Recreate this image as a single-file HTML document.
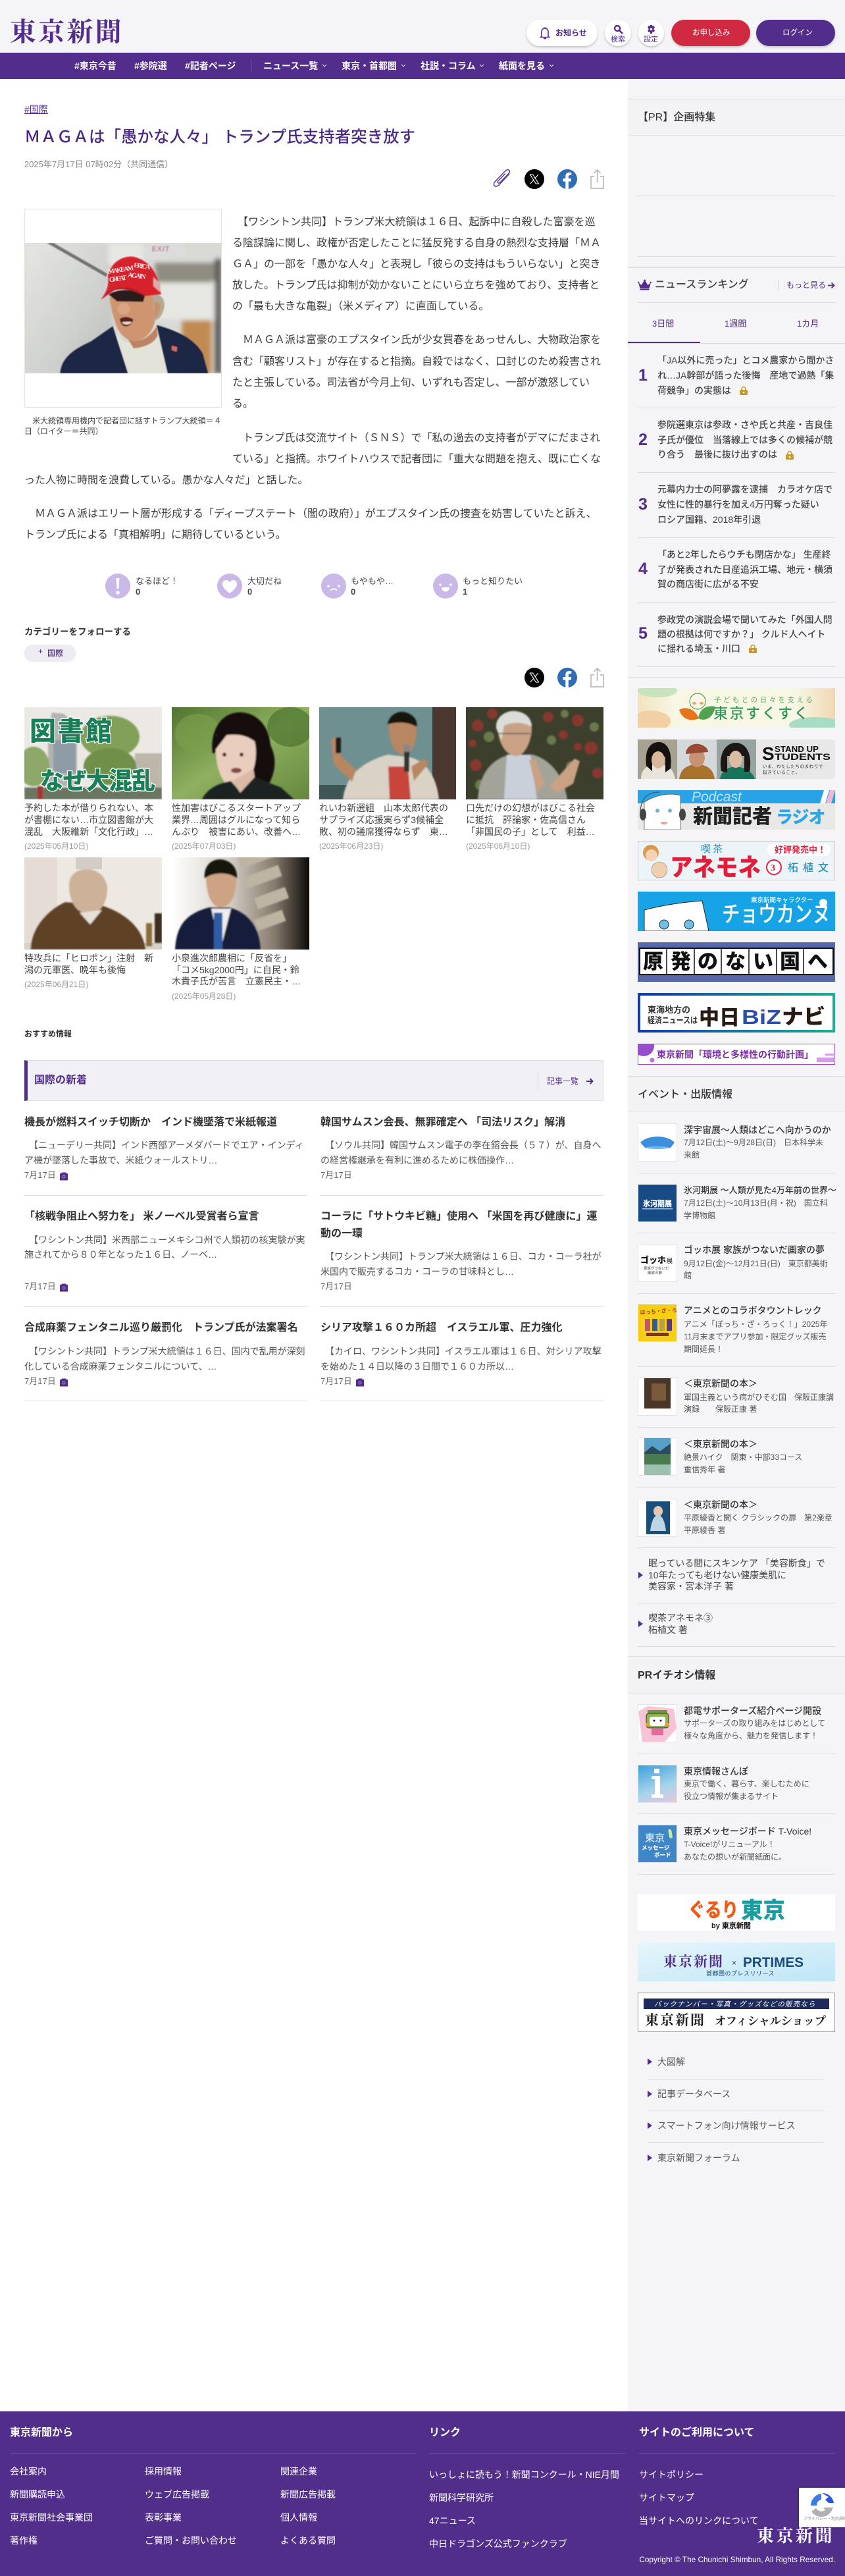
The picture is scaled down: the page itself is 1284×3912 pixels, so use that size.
<!DOCTYPE html>
<html lang="ja">
<head>
<meta charset="utf-8">
<title>MAGAは「愚かな人々」 トランプ氏支持者突き放す</title>
<style>
*{box-sizing:border-box}
html,body{margin:0;padding:0}
body{width:1284px;height:3912px;position:relative;overflow:hidden;background:#fff;color:#333;font-family:"Liberation Sans","Noto Sans CJK JP",sans-serif;font-size:14px}
.b,.t,.i{position:absolute}
.t{white-space:nowrap;line-height:20px}
.pu{color:#532d8c}
.w5{font-weight:500}
.bd{font-weight:700}
.a16{font-size:16px;color:#3d3d3d;line-height:20px}
.cap{font-size:12px;color:#444}
.ct{font-size:14px;color:#444}
.cd{font-size:12px;color:#999}
.nt{font-size:16px;font-weight:700;color:#333}
.ne{font-size:14px;color:#555}
.nd{font-size:13px;color:#666}
.hl{height:1px;background:#dedede}
.nav{font-size:14px;font-weight:700;color:#fff}
.rk{font-size:14px;font-weight:500;color:#444;line-height:20px}
.rn{font-size:25px;font-weight:900;color:#532d8c;line-height:24px}
.et{font-size:14px;font-weight:500;color:#333}
.ed{font-size:12px;color:#555}
.ll{font-size:14px;color:#444;line-height:18px}
.ft{font-size:14px;color:#fff}
.fh{font-size:16px;font-weight:700;color:#fff}
.lk{font-size:14px;color:#555}
svg{display:block}
.th{position:absolute;width:60px;height:58px;background:#fff;border:1px solid #e4e4e4;overflow:hidden}
.tri{position:absolute;width:0;height:0;border-left:7px solid #532d8c;border-top:5px solid transparent;border-bottom:5px solid transparent}
.sh{box-shadow:0 2px 3px rgba(0,0,0,.2)}
</style>
</head>
<body>
<svg width="0" height="0" style="position:absolute">
<symbol id="x" viewBox="0 0 30 30"><circle cx="15" cy="15" r="15" fill="#000"/><path d="M8.5 8h4.2l8.8 14h-4.2zM21 8l-5.5 6.2M14 16.2 8.8 22" fill="none" stroke="#fff" stroke-width="1.1"/></symbol>
<symbol id="f" viewBox="0 0 30 30"><circle cx="15" cy="15" r="15" fill="#2f6db5"/><path d="M16.8 30V18.6h3.7l.7-4.5h-4.4v-2.7c0-1.3.6-2.4 2.5-2.4h2V5.2c-1-.2-2.200-.3-3.300-.3-3.500 0-5.700 2.100-5.700 5.900v3.300H8.500v4.500h3.800V30z" fill="#fff"/></symbol>
<symbol id="s" viewBox="0 0 21 30"><path d="M6 11H1v18h19V11h-5M10.500 20V1M5.500 6l5-5 5 5" fill="none" stroke="#b0b0b0" stroke-width="1.500"/></symbol>
<symbol id="cam" viewBox="0 0 14 14"><path d="M4 1.500h6l1 1.500h2v10.500H1V3h2z" fill="#532d8c"/><circle cx="7" cy="8" r="2" fill="none" stroke="#a89bd0" stroke-width="1"/></symbol>
<symbol id="lock" viewBox="0 0 14 14"><path d="M4 6V4.500a3 3 0 0 1 6 0V6" fill="none" stroke="#c89a2a" stroke-width="1.600"/><rect x="1" y="6" width="12" height="8" rx="1.500" fill="#c89a2a"/><circle cx="7" cy="10" r="1.300" fill="#fff"/></symbol>
</svg>

<!-- header -->
<div class="b" style="left:0;top:0;width:1284px;height:80px;background:#f5f5f7"></div>
<div class="t" style="left:15px;top:27px;font-family:'Liberation Serif','Noto Serif CJK SC',serif;font-size:40px;line-height:44px;font-weight:700;color:#532d8c;letter-spacing:3.200px">東京新聞</div>

<div class="b sh" style="left:800px;top:30px;width:108px;height:40px;border-radius:20px;background:#fff"></div>
<svg class="i" style="left:820px;top:40px" width="16" height="20" viewBox="0 0 16 20"><path d="M3 15V8a5 5 0 0 1 10 0v7l1.500 1.500h-13z" fill="none" stroke="#532d8c" stroke-width="1.600"/><path d="M6 2.500h4M6 18.500h4" stroke="#532d8c" stroke-width="1.800"/></svg>
<div class="t bd pu" style="left:844px;top:40px;font-size:12px">お知らせ</div>

<div class="b sh" style="left:919px;top:30px;width:40px;height:40px;border-radius:20px;background:#fff"></div>
<svg class="i" style="left:932px;top:37px" width="15" height="15" viewBox="0 0 15 15"><circle cx="6" cy="6" r="4" fill="none" stroke="#532d8c" stroke-width="2.400"/><path d="M9 9l5 5" stroke="#532d8c" stroke-width="2.600"/></svg>
<div class="t pu" style="left:928px;top:50px;font-size:11px">検索</div>

<div class="b sh" style="left:970px;top:30px;width:39px;height:40px;border-radius:20px;background:#fff"></div>
<svg class="i" style="left:982px;top:37px" width="15" height="15" viewBox="0 0 15 15"><path d="M6 1h3l.5 2 2-.700 1.500 2.500-1.500 1.500V7.700l1.500 1.500-1.500 2.600-2-.7L9 14H6l-.5-2.900-2 .7L2 9.200l1.500-1.500V6.300L2 4.800l1.500-2.500 2 .7z" fill="#532d8c"/><circle cx="7.500" cy="7.500" r="1.800" fill="#fff"/></svg>
<div class="t pu" style="left:978px;top:50px;font-size:11px">設定</div>

<div class="b sh" style="left:1020px;top:30px;width:120px;height:40px;border-radius:20px;background:#cf2a41"></div>
<div class="t" style="left:1052px;top:40px;font-size:11.500px;color:#fff">お申し込み</div>
<div class="b sh" style="left:1149px;top:30px;width:120px;height:40px;border-radius:20px;background:#532d8c"></div>
<div class="t" style="left:1189px;top:40px;font-size:11.500px;color:#fff">ログイン</div>

<!-- nav -->
<div class="b" style="left:0;top:80px;width:1284px;height:40px;background:#532d8c"></div>
<div class="t nav" style="left:113px;top:90px">#東京今昔</div>
<div class="t nav" style="left:204px;top:90px">#参院選</div>
<div class="t nav" style="left:281px;top:90px">#記者ページ</div>
<div class="b" style="left:381px;top:90px;width:1px;height:20px;background:#7a5cb0"></div>
<div class="t nav" style="left:400px;top:90px">ニュース一覧</div>
<div class="t nav" style="left:519px;top:90px">東京・首都圏</div>
<div class="t nav" style="left:639px;top:90px">社説・コラム</div>
<div class="t nav" style="left:758px;top:90px">紙面を見る</div>
<svg class="i" style="left:0;top:0" width="1284" height="120"><g fill="none" stroke="#ddd" stroke-width="1"><path d="M490 98l3 3 3-3M610 98l3 3 3-3M729 98l3 3 3-3M835 98l3 3 3-3"/></g></svg>

<!-- sidebar background -->
<div class="b" style="left:954px;top:120px;width:330px;height:3542px;background:#f5f5f7"></div>

<!-- main -->
<div class="t" style="left:37px;top:156px;font-size:14px;color:#532d8c;text-decoration:underline">#国際</div>
<div class="t w5" style="left:37px;top:191px;font-size:24.500px;line-height:36px;color:#4a2a85">ＭＡＧＡは「愚かな人々」 トランプ氏支持者突き放す</div>
<div class="t" style="left:37px;top:240px;font-size:13px;color:#888">2025年7月17日 07時02分（共同通信）</div>

<svg class="i" style="left:748px;top:257px" width="30" height="30" viewBox="0 0 30 30"><path d="M26 7 10 24c-2 2.200-5 2.700-6.500 1.300S2 21 4.200 18.800L20 2.500c1.800-1.800 4.300-2.200 5.600-1s.9 3.600-.9 5.400L12 20c-1.100 1.100-2.500 1.400-3.300.7s-.4-2.200.7-3.300L20 6.500" fill="none" stroke="#5a3a96" stroke-width="1.500"/></svg>
<svg class="i" style="left:797px;top:257px" width="30" height="30"><use href="#x"/></svg>
<svg class="i" style="left:847px;top:257px" width="30" height="30"><use href="#f"/></svg>
<svg class="i" style="left:897px;top:257px" width="21" height="30"><use href="#s"/></svg>

<!-- article photo -->
<div class="b" style="left:37px;top:317px;width:300px;height:302px;border:1px solid #e2e2e2;background:#fff"></div>
<svg class="i" style="left:38px;top:369px" width="298" height="198" viewBox="0 0 894 594">
<defs>
<filter id="bl1" x="-5%" y="-5%" width="110%" height="110%"><feGaussianBlur stdDeviation="10"/></filter>
<filter id="bl2"><feGaussianBlur stdDeviation="2.500"/></filter>
<filter id="b3" x="-5%" y="-5%" width="110%" height="110%"><feGaussianBlur stdDeviation="1"/></filter>
<linearGradient id="wall" x1="0" x2="1" y1="0" y2="1"><stop offset="0" stop-color="#e6e7e4"/><stop offset=".6" stop-color="#cfd1ce"/><stop offset="1" stop-color="#babcb9"/></linearGradient>
</defs>
<rect width="894" height="594" fill="#d8dad7"/>
<g filter="url(#bl1)">
<rect x="0" y="0" width="400" height="594" fill="url(#wall)"/>
<path d="M380 0h160v100H380z" fill="#e6e6e2"/>
<rect x="545" y="0" width="349" height="80" fill="#d9d9d6"/>
<path d="M590 90h300v60l-60 40-230-10z" fill="#8f8d82"/>
<path d="M610 180h260v170H600z" fill="#e6e6e2"/>
<rect x="715" y="352" width="135" height="242" fill="#c28a52"/>
<rect x="865" y="70" width="29" height="524" fill="#5c5a55"/>
</g>
<path d="M100 0h30l245 140-6 14z" fill="#73736f" filter="url(#bl2)"/>
<path d="M545 5h185v60l-185 15z" fill="#dcdcdc" filter="url(#bl2)"/>
<text x="578" y="38" font-size="32" font-weight="700" font-family="Liberation Sans" fill="#c08a92" letter-spacing="3" filter="url(#bl2)">EXIT</text>
<g filter="url(#bl2)">
<path d="M160 594c6-70 60-110 140-145l100-70 70 215z" fill="#1a2545"/>
<path d="M600 374c90 25 170 60 210 130l25 90H640z" fill="#1a2545"/>
<path d="M415 415 470 594h180l-30-130-20-85c-20 50-70 80-130 75-30-5-40-25-55-39z" fill="#e3e3da"/>
<path d="M385 245 590 235l6 100c-5 60-45 110-95 112-40 0-75-35-90-85-10-35-22-75-26-117z" fill="#cf9571"/>
<path d="M470 440c40 15 90 5 130-60l5 40c-10 30-50 55-110 60z" fill="#bd8362"/>
<path d="M580 240c30-15 60 10 55 50-6 34-22 60-45 62z" fill="#b4a993"/>
<path d="M590 270c20-5 30 10 25 30s-14 38-25 44z" fill="#c98f6e"/>
<path d="M382 235c40-30 130-25 165 5l-8 28-120-2z" fill="#2a1f1c"/>
<ellipse cx="450" cy="300" rx="28" ry="26" fill="#dba583"/>
<path d="M432 345c20-12 45-10 62 4-4 22-24 34-40 30-14-2-22-20-22-34z" fill="#59201e"/>
<path d="M440 362c14-4 34-4 48-2-8 12-32 18-48 2z" fill="#e8d8cc"/>
<path d="M345 258c25-30 40-65 33-108 17-70 72-90 112-88 70 14 120 68 130 172l-70 8c-50-30-120-42-150-22-20 14-40 30-55 38z" fill="#d7232e"/>
<path d="M362 238c30-30 90-45 130-30l58 32-4 3c-50-30-120-42-150-22z" fill="#b01a23"/>
<path d="M585 155l32 30v40l-32-28z" fill="#e0a8a8"/>
<path d="M669 468l25 6-3 22-22-8z" fill="#d86c62"/>
</g>
<g font-family="Liberation Serif" font-weight="700" fill="#f6e6e6">
<text x="380" y="141" font-size="31" transform="rotate(-9 380 141)" textLength="118">MAKE AM</text>
<text x="495" y="110" font-size="31" transform="rotate(8 495 110)" textLength="76">ERICA</text>
<text x="385" y="178" font-size="31" transform="rotate(-8 385 178)" textLength="80">GREAT</text>
<text x="468" y="155" font-size="31" transform="rotate(6 468 155)" textLength="82">AGAIN</text>
</g>
</svg>
<div class="t cap" style="left:37px;top:629px">　米大統領専用機内で記者団に話すトランプ大統領＝４</div>
<div class="t cap" style="left:37px;top:645px">日（ロイター＝共同）</div>

<!-- article text -->
<div class="t a16" style="left:353px;top:328px">　【ワシントン共同】トランプ米大統領は１６日、起訴中に自殺した富豪を巡</div>
<div class="t a16" style="left:353px;top:360px">る陰謀論に関し、政権が否定したことに猛反発する自身の熱烈な支持層「ＭＡ</div>
<div class="t a16" style="left:353px;top:392px">ＧＡ」の一部を「愚かな人々」と表現し「彼らの支持はもういらない」と突き</div>
<div class="t a16" style="left:353px;top:424px">放した。トランプ氏は抑制が効かないことにいら立ちを強めており、支持者と</div>
<div class="t a16" style="left:353px;top:456px">の「最も大きな亀裂」（米メディア）に直面している。</div>
<div class="t a16" style="left:353px;top:507px">　ＭＡＧＡ派は富豪のエプスタイン氏が少女買春をあっせんし、大物政治家を</div>
<div class="t a16" style="left:353px;top:540px">含む「顧客リスト」が存在すると指摘。自殺ではなく、口封じのため殺害され</div>
<div class="t a16" style="left:353px;top:572px">たと主張している。司法省が今月上旬、いずれも否定し、一部が激怒してい</div>
<div class="t a16" style="left:353px;top:604px">る。</div>
<div class="t a16" style="left:353px;top:656px">　トランプ氏は交流サイト（ＳＮＳ）で「私の過去の支持者がデマにだまされ</div>
<div class="t a16" style="left:353px;top:688px">ている」と指摘。ホワイトハウスで記者団に「重大な問題を抱え、既に亡くな</div>
<div class="t a16" style="left:37px;top:720px">った人物に時間を浪費している。愚かな人々だ」と話した。</div>
<div class="t a16" style="left:37px;top:771px">　ＭＡＧＡ派はエリート層が形成する「ディープステート（闇の政府）」がエプスタイン氏の捜査を妨害していたと訴え、</div>
<div class="t a16" style="left:37px;top:803px">トランプ氏による「真相解明」に期待しているという。</div>

<!-- reactions -->
<svg class="i" style="left:160px;top:871px" width="38" height="38"><circle cx="19" cy="19" r="19" fill="#c9b8e8"/><path d="M16.500 7h5l-1 16h-3z" fill="#fff"/><circle cx="19" cy="29" r="2.800" fill="#fff"/></svg>
<div class="t" style="left:206px;top:873px;font-size:13px;color:#444">なるほど！</div>
<div class="t bd" style="left:206px;top:889px;font-size:13px;color:#444">0</div>
<svg class="i" style="left:330px;top:871px" width="38" height="38"><circle cx="19" cy="19" r="19" fill="#c9b8e8"/><path d="M19 30C11 24 8 20 8 15.500 8 12 10.500 10 13.500 10c2.300 0 4.300 1.200 5.500 3.500C20.200 11.200 22.200 10 24.500 10 27.500 10 30 12 30 15.500 30 20 27 24 19 30z" fill="#fff"/></svg>
<div class="t" style="left:376px;top:873px;font-size:13px;color:#444">大切だね</div>
<div class="t bd" style="left:376px;top:889px;font-size:13px;color:#444">0</div>
<svg class="i" style="left:488px;top:871px" width="38" height="38"><circle cx="19" cy="19" r="19" fill="#c9b8e8"/><circle cx="11" cy="19" r="1.800" fill="#fff"/><circle cx="27" cy="19" r="1.800" fill="#fff"/><path d="M14.500 26c1-3.500 8-3.500 9 0" fill="none" stroke="#fff" stroke-width="1.800"/></svg>
<div class="t" style="left:533px;top:873px;font-size:13px;color:#444">もやもや…</div>
<div class="t bd" style="left:533px;top:889px;font-size:13px;color:#444">0</div>
<svg class="i" style="left:658px;top:871px" width="38" height="38"><circle cx="19" cy="19" r="19" fill="#c9b8e8"/><circle cx="11" cy="17" r="1.800" fill="#fff"/><circle cx="27" cy="17" r="1.800" fill="#fff"/><path d="M13 21h12c0 4-3 6.500-6 6.500S13 25 13 21z" fill="#fff"/></svg>
<div class="t" style="left:703px;top:873px;font-size:13px;color:#444">もっと知りたい</div>
<div class="t bd" style="left:703px;top:889px;font-size:13px;color:#444">1</div>

<div class="t bd" style="left:37px;top:950px;font-size:13.500px;color:#333">カテゴリーをフォローする</div>
<div class="b" style="left:37px;top:979px;width:78px;height:25px;border-radius:13px;background:#eeecf2;box-shadow:0 1px 2px rgba(0,0,0,.1)"></div>
<div class="t pu" style="left:58px;top:979px;font-size:12px">+</div>
<div class="t w5 pu" style="left:72px;top:982px;font-size:12px">国際</div>
<svg class="i" style="left:797px;top:1014px" width="30" height="30"><use href="#x"/></svg>
<svg class="i" style="left:847px;top:1014px" width="30" height="30"><use href="#f"/></svg>
<svg class="i" style="left:897px;top:1014px" width="21" height="30"><use href="#s"/></svg>

<!-- cards -->
<svg class="i" style="left:37px;top:1074px" width="209" height="140" viewBox="0 0 209 140">
<rect width="209" height="140" fill="#ece9e5"/>
<g filter="url(#b3)">
<path d="M42 8 60 10 80 30v90H36V40z" fill="#b3b3b3"/>
<rect x="44" y="50" width="34" height="50" fill="#8f9ba6"/>
<rect x="168" y="70" width="41" height="55" fill="#bdb6aa"/>
<ellipse cx="130" cy="45" rx="45" ry="32" fill="#83a058"/>
<ellipse cx="130" cy="90" rx="40" ry="28" fill="#6f8f48"/>
<ellipse cx="14" cy="90" rx="24" ry="30" fill="#8da868"/>
<rect y="122" width="209" height="18" fill="#6b7660"/>
<rect x="20" y="120" width="8" height="20" fill="#a33"/>
</g>
<g font-family="Liberation Sans,Noto Sans CJK JP,sans-serif" font-weight="900" stroke="#fff" stroke-width="2.500" paint-order="stroke" fill="#1b7f58">
<text x="8" y="50" font-size="40" textLength="125">図書館</text>
<text x="24" y="124" font-size="36" textLength="175">なぜ大混乱</text>
</g>
</svg>
<svg class="i" style="left:261px;top:1074px" width="209" height="140" viewBox="0 0 209 140">
<defs><linearGradient id="g2" x1="0" y1="0" x2="1" y2="1"><stop offset="0" stop-color="#517530"/><stop offset=".5" stop-color="#8fb060"/><stop offset="1" stop-color="#64883c"/></linearGradient></defs>
<rect width="209" height="140" fill="url(#g2)"/>
<ellipse cx="40" cy="40" rx="35" ry="30" fill="#7da04e" opacity=".6"/><ellipse cx="180" cy="30" rx="35" ry="30" fill="#426a28" opacity=".6"/>
<g filter="url(#b3)">
<path d="M62 70c-4-30 10-60 38-62 28-2 48 20 50 50 10 20 8 40-4 62h-22V60z" fill="#14110e"/>
<path d="M68 42c12 4 34-8 58 10 6 25-2 62-26 72-24 2-38-40-32-82z" fill="#e9cebd"/>
<path d="M66 65c-4-20 8-42 32-40l-15 18z" fill="#14110e"/>
<path d="M128 50c14 15 24 45 18 70h-18z" fill="#14110e"/>
<path d="M46 140c6-14 22-24 44-28l12 14 24-20 40 16 20 18z" fill="#1f2420"/>
<path d="M92 112l12 18 22-24-2-12z" fill="#dab9a6"/>
<ellipse cx="98" cy="96" rx="8" ry="4" fill="#8a4a44"/>
<circle cx="80" cy="72" r="3" fill="#3a2a22"/><circle cx="106" cy="72" r="3" fill="#3a2a22"/>
</g>
</svg>
<svg class="i" style="left:485px;top:1074px" width="208" height="140" viewBox="0 0 208 140">
<rect width="208" height="140" fill="#6f9090"/><rect x="172" width="36" height="140" fill="#4a3830"/><rect y="118" width="172" height="22" fill="#3e5656"/>
<g filter="url(#b3)">
<path d="M36 140c4-34 26-56 68-68l34 4c24 6 40 28 44 64z" fill="#d9d2c5"/>
<path d="M106 30c0-14 10-22 22-20s20 10 20 22c0 24-8 42-22 40-12-2-20-20-20-42z" fill="#b98662"/>
<path d="M104 26c2-14 16-22 28-18s18 12 16 22c-12-8-30-8-44-4z" fill="#17130f"/>
<path d="M105 90h30l4 50h-32z" fill="#c7453a"/>
<path d="M18 48l10-3 6 30 22 20-6 18-28-26z" fill="#b98662"/>
<rect x="25" y="46" width="8" height="24" rx="2" fill="#1a1a1a"/>
<rect x="129" y="62" width="8" height="36" fill="#333"/><circle cx="133" cy="62" r="6" fill="#888"/>
<path d="M140 90l20-12 6 8-22 26z" fill="#b98662"/>
</g>
</svg>
<svg class="i" style="left:708px;top:1074px" width="209" height="140" viewBox="0 0 209 140">
<rect width="209" height="140" fill="#3c3f2c"/>
<g filter="url(#b3)">
<g fill="#86382e"><circle cx="18" cy="28" r="9"/><circle cx="170" cy="20" r="9"/><circle cx="190" cy="62" r="10"/><circle cx="15" cy="88" r="9"/><circle cx="148" cy="42" r="7"/><circle cx="40" cy="10" r="8"/><circle cx="125" cy="15" r="8"/><circle cx="200" cy="100" r="8"/><circle cx="170" cy="60" r="6"/><circle cx="10" cy="55" r="6"/></g>
<g fill="#6b7a4c"><circle cx="35" cy="45" r="8"/><circle cx="195" cy="30" r="7"/><circle cx="160" cy="90" r="8"/><circle cx="22" cy="118" r="8"/><circle cx="130" cy="50" r="7"/><circle cx="150" cy="10" r="6"/></g>
<path d="M18 140c2-36 18-60 48-68l36 0c26 8 46 30 52 68z" fill="#a3a39a"/>
<path d="M62 72h36l10 68H58z" fill="#c9d0da"/>
<path d="M48 26c2-12 18-22 32-18 14 4 20 14 20 28-2 20-12 40-26 38-14-2-26-20-26-48z" fill="#c9a184"/>
<path d="M46 32c-2-16 14-28 30-26 16 2 24 12 24 24-12-8-30-8-42-2l-4 22z" fill="#dcdcd8"/>
<path d="M48 40h50" stroke="#555" stroke-width="1.500"/>
<path d="M165 78l8 4-10 34-24 14-12-10z" fill="#c9a184"/>
<path d="M96 80l10 0 14 36-12 14z" fill="#c9a184"/>
</g>
</svg>
<svg class="i" style="left:37px;top:1302px" width="209" height="140" viewBox="0 0 209 140">
<rect width="209" height="140" fill="#eee8e2"/><rect x="78" y="0" width="40" height="18" fill="#d3cdc8"/><rect x="0" y="0" width="50" height="140" fill="#e5ddd5"/>
<rect y="130" width="209" height="10" fill="#d6d0c8"/>
<g filter="url(#b3)">
<path d="M10 140c0-30 22-58 52-72l52 4c34 10 66 32 70 68z" fill="#5f4325"/>
<path d="M68 42c0-16 14-26 30-24s28 14 28 30c0 24-14 40-30 38-18-2-28-20-28-44z" fill="#cdb198"/>
<path d="M84 84l16 18 18-22z" fill="#e6e1d8"/>
<rect x="198" y="85" width="11" height="45" fill="#3e2e22"/>
<rect x="185" y="100" width="9" height="35" fill="#8a6c3a"/>
</g>
</svg>
<svg class="i" style="left:261px;top:1302px" width="209" height="140" viewBox="0 0 209 140">
<defs><linearGradient id="g6" x1="0" x2="1" y1="0" y2="0"><stop offset="0" stop-color="#fff"/><stop offset=".4" stop-color="#d8d3cc"/><stop offset=".75" stop-color="#857a6c"/><stop offset="1" stop-color="#0c0a08"/></linearGradient></defs>
<rect width="209" height="140" fill="url(#g6)"/>
<g filter="url(#b3)">
<g fill="#bdb4a4"><rect x="100" y="0" width="55" height="18" transform="rotate(-20 100 0)"/><rect x="105" y="32" width="60" height="18" transform="rotate(-20 105 32)"/><rect x="125" y="62" width="50" height="18" transform="rotate(-20 125 62)"/><rect x="125" y="95" width="45" height="18" transform="rotate(-20 125 95)"/></g>
<path d="M5 140c2-34 14-54 52-64h30c30 8 46 30 48 64z" fill="#141d3a"/>
<path d="M60 78l14 62 16-62z" fill="#eee"/>
<rect x="64" y="84" width="13" height="56" fill="#2d5da4"/>
<path d="M52 28c0-14 12-20 24-18 14 2 22 10 22 24 0 22-8 42-24 42-14 0-22-22-22-48z" fill="#cda383"/>
<path d="M50 32c-2-22 14-32 30-28 14 4 20 16 19 28-12-10-36-10-49 0z" fill="#15120f"/>
</g>
</svg>

<div class="t ct" style="left:37px;top:1217px">予約した本が借りられない、本</div>
<div class="t ct" style="left:37px;top:1235px">が書棚にない…市立図書館が大</div>
<div class="t ct" style="left:37px;top:1253px">混乱　大阪維新「文化行政」…</div>
<div class="t cd" style="left:37px;top:1275px">(2025年05月10日)</div>
<div class="t ct" style="left:261px;top:1217px">性加害はびこるスタートアップ</div>
<div class="t ct" style="left:261px;top:1235px">業界…周囲はグルになって知ら</div>
<div class="t ct" style="left:261px;top:1253px">んぷり　被害にあい、改善へ…</div>
<div class="t cd" style="left:261px;top:1275px">(2025年07月03日)</div>
<div class="t ct" style="left:485px;top:1217px">れいわ新選組　山本太郎代表の</div>
<div class="t ct" style="left:485px;top:1235px">サプライズ応援実らず3候補全</div>
<div class="t ct" style="left:485px;top:1253px">敗、初の議席獲得ならず　東…</div>
<div class="t cd" style="left:485px;top:1275px">(2025年06月23日)</div>
<div class="t ct" style="left:708px;top:1217px">口先だけの幻想がはびこる社会</div>
<div class="t ct" style="left:708px;top:1235px">に抵抗　評論家・佐高信さん</div>
<div class="t ct" style="left:708px;top:1253px">「非国民の子」として　利益…</div>
<div class="t cd" style="left:708px;top:1275px">(2025年06月10日)</div>
<div class="t ct" style="left:37px;top:1445px">特攻兵に「ヒロポン」注射　新</div>
<div class="t ct" style="left:37px;top:1463px">潟の元軍医、晩年も後悔</div>
<div class="t cd" style="left:37px;top:1485px">(2025年06月21日)</div>
<div class="t ct" style="left:261px;top:1445px">小泉進次郎農相に「反省を」</div>
<div class="t ct" style="left:261px;top:1463px">「コメ5kg2000円」に自民・鈴</div>
<div class="t ct" style="left:261px;top:1480px">木貴子氏が苦言　立憲民主・…</div>
<div class="t cd" style="left:261px;top:1503px">(2025年05月28日)</div>

<!-- recommend / news -->
<div class="t bd" style="left:37px;top:1560px;font-size:12px;color:#333">おすすめ情報</div>
<div class="b" style="left:37px;top:1610px;width:880px;height:62px;background:#f0f0f5;border:1px solid #dedee2;border-left:5px solid #532d8c"></div>
<div class="t bd pu" style="left:52px;top:1631px;font-size:16px">国際の新着</div>
<div class="b" style="left:817px;top:1626px;width:1px;height:30px;background:#d8d8de"></div>
<div class="t pu" style="left:831px;top:1632px;font-size:12px">記事一覧</div>
<svg class="i" style="left:890px;top:1636px" width="12" height="12" viewBox="0 0 12 12"><path d="M1 6h9M6.500 2l4 4-4 4" fill="none" stroke="#532d8c" stroke-width="2"/></svg>

<div class="t nt" style="left:37px;top:1695px">機長が燃料スイッチ切断か　インド機墜落で米紙報道</div>
<div class="t ne" style="left:37px;top:1729px">　【ニューデリー共同】インド西部アーメダバードでエア・インディ</div>
<div class="t ne" style="left:37px;top:1752px">ア機が墜落した事故で、米紙ウォールストリ…</div>
<div class="t nd" style="left:37px;top:1775px">7月17日</div>
<svg class="i" style="left:90px;top:1779px" width="14" height="14"><use href="#cam"/></svg>
<div class="b hl" style="left:37px;top:1815px;width:430px"></div>

<div class="t nt" style="left:487px;top:1695px">韓国サムスン会長、無罪確定へ 「司法リスク」解消</div>
<div class="t ne" style="left:487px;top:1729px">　【ソウル共同】韓国サムスン電子の李在鎔会長（５７）が、自身へ</div>
<div class="t ne" style="left:487px;top:1752px">の経営権継承を有利に進めるために株価操作…</div>
<div class="t nd" style="left:487px;top:1775px">7月17日</div>
<div class="b hl" style="left:487px;top:1815px;width:430px"></div>

<div class="t nt" style="left:37px;top:1838px">「核戦争阻止へ努力を」 米ノーベル受賞者ら宣言</div>
<div class="t ne" style="left:37px;top:1873px">　【ワシントン共同】米西部ニューメキシコ州で人類初の核実験が実</div>
<div class="t ne" style="left:37px;top:1895px">施されてから８０年となった１６日、ノーベ…</div>
<div class="t nd" style="left:37px;top:1944px">7月17日</div>
<svg class="i" style="left:90px;top:1948px" width="14" height="14"><use href="#cam"/></svg>
<div class="b hl" style="left:37px;top:1984px;width:430px"></div>

<div class="t nt" style="left:487px;top:1838px">コーラに「サトウキビ糖」使用へ 「米国を再び健康に」運</div>
<div class="t nt" style="left:487px;top:1864px">動の一環</div>
<div class="t ne" style="left:487px;top:1898px">　【ワシントン共同】トランプ米大統領は１６日、コカ・コーラ社が</div>
<div class="t ne" style="left:487px;top:1921px">米国内で販売するコカ・コーラの甘味料とし…</div>
<div class="t nd" style="left:487px;top:1944px">7月17日</div>
<div class="b hl" style="left:487px;top:1984px;width:430px"></div>

<div class="t nt" style="left:37px;top:2007px">合成麻薬フェンタニル巡り厳罰化　トランプ氏が法案署名</div>
<div class="t ne" style="left:37px;top:2042px">　【ワシントン共同】トランプ米大統領は１６日、国内で乱用が深刻</div>
<div class="t ne" style="left:37px;top:2065px">化している合成麻薬フェンタニルについて、…</div>
<div class="t nd" style="left:37px;top:2088px">7月17日</div>
<svg class="i" style="left:90px;top:2092px" width="14" height="14"><use href="#cam"/></svg>
<div class="b hl" style="left:37px;top:2127px;width:430px"></div>

<div class="t nt" style="left:487px;top:2007px">シリア攻撃１６０カ所超　イスラエル軍、圧力強化</div>
<div class="t ne" style="left:487px;top:2042px">　【カイロ、ワシントン共同】イスラエル軍は１６日、対シリア攻撃</div>
<div class="t ne" style="left:487px;top:2065px">を始めた１４日以降の３日間で１６０カ所以…</div>
<div class="t nd" style="left:487px;top:2088px">7月17日</div>
<svg class="i" style="left:540px;top:2092px" width="14" height="14"><use href="#cam"/></svg>
<div class="b hl" style="left:487px;top:2127px;width:430px"></div>

<!-- sidebar: PR -->
<div class="b" style="left:954px;top:150px;width:330px;height:56px;background:#f3f3f5;border-top:1px solid #dcdcdc;border-bottom:1px solid #e4e4e4"></div>
<div class="t w5" style="left:969px;top:169px;font-size:16px;color:#333">【PR】企画特集</div>
<div class="b hl" style="left:969px;top:297px;width:300px"></div>
<div class="b hl" style="left:969px;top:389px;width:300px"></div>

<!-- ranking -->
<div class="b" style="left:954px;top:405px;width:330px;height:2px;background:#e2e2e2"></div>
<svg class="i" style="left:969px;top:424px" width="21" height="17" viewBox="0 0 21 17"><path d="M1 5l4.500 4L10.500 1l5 8L20 5l-2.500 9h-14z" fill="#532d8c"/><rect x="3.500" y="14.500" width="14" height="2" fill="#532d8c"/><circle cx="10.500" cy="2" r="1.500" fill="#532d8c"/><circle cx="1.300" cy="5" r="1.200" fill="#532d8c"/><circle cx="19.700" cy="5" r="1.200" fill="#532d8c"/></svg>
<div class="t w5" style="left:995px;top:423px;font-size:16px;color:#444">ニュースランキング</div>
<div class="b" style="left:1182px;top:425px;width:1px;height:16px;background:#d8d8d8"></div>
<div class="t pu" style="left:1195px;top:423px;font-size:12px">もっと見る</div>
<svg class="i" style="left:1258px;top:428px" width="11" height="11" viewBox="0 0 11 11"><path d="M0 5.500h9M5.500 1.500l4 4-4 4" fill="none" stroke="#532d8c" stroke-width="1.800"/></svg>
<div class="b hl" style="left:969px;top:459px;width:300px"></div>
<div class="t pu" style="left:991px;top:482px;font-size:13px">3日間</div>
<div class="t pu" style="left:1101px;top:482px;font-size:13px">1週間</div>
<div class="t pu" style="left:1211px;top:482px;font-size:13px">1カ月</div>
<div class="b" style="left:954px;top:521px;width:330px;height:1px;background:#dcdcdc"></div>
<div class="b" style="left:954px;top:519px;width:110px;height:2px;background:#532d8c"></div>

<div class="t rn" style="left:970px;top:558px">1</div>
<div class="t rk" style="left:999px;top:537px">「JA以外に売った」とコメ農家から聞かさ</div>
<div class="t rk" style="left:999px;top:560px">れ…JA幹部が語った後悔　産地で過熱「集</div>
<div class="t rk" style="left:999px;top:583px">荷競争」の実態は</div>
<svg class="i" style="left:1123px;top:586px" width="14" height="14"><use href="#lock"/></svg>
<div class="b hl" style="left:969px;top:619px;width:300px"></div>

<div class="t rn" style="left:970px;top:656px">2</div>
<div class="t rk" style="left:999px;top:635px">参院選東京は参政・さや氏と共産・吉良佳</div>
<div class="t rk" style="left:999px;top:658px">子氏が優位　当落線上では多くの候補が競</div>
<div class="t rk" style="left:999px;top:680px">り合う　最後に抜け出すのは</div>
<svg class="i" style="left:1193px;top:684px" width="14" height="14"><use href="#lock"/></svg>
<div class="b hl" style="left:969px;top:717px;width:300px"></div>

<div class="t rn" style="left:970px;top:754px">3</div>
<div class="t rk" style="left:999px;top:733px">元幕内力士の阿夢露を逮捕　カラオケ店で</div>
<div class="t rk" style="left:999px;top:756px">女性に性的暴行を加え4万円奪った疑い</div>
<div class="t rk" style="left:999px;top:779px">ロシア国籍、2018年引退</div>
<div class="b hl" style="left:969px;top:816px;width:300px"></div>

<div class="t rn" style="left:970px;top:852px">4</div>
<div class="t rk" style="left:999px;top:832px">「あと2年したらウチも閉店かな」 生産終</div>
<div class="t rk" style="left:999px;top:855px">了が発表された日産追浜工場、地元・横須</div>
<div class="t rk" style="left:999px;top:877px">賀の商店街に広がる不安</div>
<div class="b hl" style="left:969px;top:914px;width:300px"></div>

<div class="t rn" style="left:970px;top:950px">5</div>
<div class="t rk" style="left:999px;top:931px">参政党の演説会場で聞いてみた「外国人問</div>
<div class="t rk" style="left:999px;top:953px">題の根拠は何ですか？」 クルド人ヘイト</div>
<div class="t rk" style="left:999px;top:975px">に揺れる埼玉・川口</div>
<svg class="i" style="left:1137px;top:978px" width="14" height="14"><use href="#lock"/></svg>
<div class="b hl" style="left:969px;top:1012px;width:300px"></div>
<div class="b" style="left:954px;top:1028px;width:330px;height:2px;background:#e6e6e6"></div>

<!-- banners -->
<svg class="i" style="left:969px;top:1045px" width="300" height="60" viewBox="0 0 300 60">
<defs><linearGradient id="gb1" x1="0" x2="1"><stop offset="0" stop-color="#f2e3bf"/><stop offset=".2" stop-color="#f8f7e6"/><stop offset=".8" stop-color="#f8f7e6"/><stop offset="1" stop-color="#f0d7b4"/></linearGradient></defs>
<rect width="300" height="60" fill="url(#gb1)"/>
<ellipse cx="20" cy="50" rx="30" ry="16" fill="#f2d0a4"/><ellipse cx="270" cy="56" rx="40" ry="12" fill="#a9dcc4"/><ellipse cx="30" cy="4" rx="30" ry="10" fill="#c9e4bd"/>
<path d="M63 33c10-6 24-2 30 13-14 6-26 0-30-13z" fill="#e6761c"/><path d="M92 46c2-16 14-20 26-18-2 15-14 24-26 18z" fill="#52a34f"/>
<circle cx="91" cy="20" r="12" fill="none" stroke="#52a34f" stroke-width="1.200"/><ellipse cx="86" cy="23" rx="3" ry="2" fill="#f0a070"/><ellipse cx="97" cy="23" rx="3" ry="2" fill="#f0a070"/>
<text x="116" y="21" font-size="10.500" fill="#64a85c" letter-spacing="3.500">子どもとの日々を支える</text>
<text x="115" y="46" font-size="22" font-weight="500" fill="#2f9a56" letter-spacing="2.500">東京すくすく</text>
</svg>
<svg class="i" style="left:969px;top:1123px" width="300" height="60" viewBox="0 0 300 60">
<rect width="300" height="60" rx="5" fill="#e8e8e8"/>
<rect width="60" height="60" fill="#a6a190"/><rect x="60" width="60" height="60" fill="#d5d8da"/><rect x="120" width="60" height="60" fill="#96a39e"/>
<path d="M5 60c0-14 8-20 20-22l12 0c12 2 18 10 20 22z" fill="#e9e4dc"/><path d="M13 40C10 14 20 4 32 4s21 12 18 40l-8 6V26H22v22z" fill="#15120f"/><ellipse cx="31" cy="31" rx="10" ry="13" fill="#d8b89a"/>
<path d="M63 60c2-14 10-20 22-22h10c12 2 20 8 22 22z" fill="#a8732e"/><ellipse cx="90" cy="28" rx="12" ry="14" fill="#c79372"/><path d="M73 22c0-10 10-17 20-15s14 8 14 12z" fill="#9a4a32"/>
<path d="M125 60c2-10 8-16 18-18h12c10 2 20 8 23 18z" fill="#19735a"/><path d="M127 48C122 20 135 5 149 5s26 14 21 44l-8 0V25h-26v25z" fill="#1a1714"/><ellipse cx="149" cy="30" rx="10" ry="13" fill="#dcbda3"/>
<text x="189" y="31" font-size="28" font-weight="700" fill="#111" font-family="Liberation Sans">S</text>
<text x="208" y="19" font-size="12.500" font-weight="700" fill="#111" font-family="Liberation Sans" textLength="67" lengthAdjust="spacingAndGlyphs">STAND UP</text>
<text x="208" y="31" font-size="14" font-weight="700" fill="#111" font-family="Liberation Sans" textLength="85" lengthAdjust="spacingAndGlyphs">TUDENTS</text>
<text x="190" y="43" font-size="6.500" fill="#333" letter-spacing=".6">いま、わたしたちのまわりで</text>
<text x="190" y="52" font-size="6.500" fill="#333" letter-spacing=".6">起きていること。</text>
</svg>
<svg class="i" style="left:969px;top:1200px" width="300" height="60" viewBox="0 0 300 60">
<rect width="300" height="60" fill="#e8e8e6"/><rect width="300" height="20" fill="#29a3e8"/>
<path d="M283 0h8l-6 20h-8z" fill="#fff"/><path d="M292 0h8l-6 20h-8z" fill="#f3b6d2"/>
<path d="M10 60V18C30 6 50 4 65 8v52z" fill="#fff" stroke="#555" stroke-width=".8"/>
<path d="M4 35c0-26 14-32 30-32" fill="none" stroke="#555" stroke-width="1.200"/><ellipse cx="8" cy="37" rx="5" ry="9" fill="#444"/><ellipse cx="68" cy="37" rx="5" ry="9" fill="#444"/>
<circle cx="30" cy="31" r="3" fill="#6fb1d4"/><circle cx="49" cy="31" r="3" fill="#6fb1d4"/><ellipse cx="40" cy="50" rx="5" ry="2" fill="#e9a0a0"/>
<text x="82" y="17" font-size="21" fill="#bfe4f8" font-style="italic" font-family="Liberation Sans">Podcast</text>
<text x="84" y="50" font-size="30" font-weight="900" fill="#222">新聞記者</text>
<text x="210" y="50" font-size="26" font-weight="900" fill="#2ba6e6" letter-spacing="-1">ラジオ</text>
</svg>
<svg class="i" style="left:969px;top:1277px" width="300" height="60" viewBox="0 0 300 60">
<rect x=".5" y=".5" width="299" height="59" fill="#edf4f8" stroke="#ccc"/>
<circle cx="20" cy="18" r="12" fill="#d99a4a"/><circle cx="21" cy="22" r="9" fill="#f3d3b4"/><circle cx="33" cy="44" r="12" fill="#f0cfae" stroke="#888" stroke-width=".6"/>
<text x="96" y="17" font-size="15" fill="#2a8fb8" letter-spacing="3">喫茶</text>
<text x="49" y="53" font-size="37" font-weight="900" fill="#e31c3a" textLength="138" lengthAdjust="spacingAndGlyphs">アネモネ</text>
<rect x="197" y="4" width="96" height="19" rx="9" fill="#fff"/>
<text x="208" y="18" font-size="13" font-weight="700" fill="#e31c3a">好評発売中！</text>
<circle cx="207" cy="40" r="11" fill="#fff" stroke="#e31c3a" stroke-width="2"/><text x="202" y="45" font-size="14" font-weight="900" fill="#e31c3a" font-family="Liberation Serif">3</text>
<text x="228" y="46" font-size="16" font-weight="500" fill="#2a8fb8" letter-spacing="7">柘植文</text>
</svg>
<svg class="i" style="left:969px;top:1354px" width="300" height="60" viewBox="0 0 300 60">
<rect width="300" height="60" fill="#17a4e6"/>
<path d="M10 60V28c30-8 60-12 88-14l10 46z" fill="#fff" stroke="#222"/>
<circle cx="40" cy="50" r="7" fill="#6dbfe8" stroke="#222"/><circle cx="78" cy="50" r="7" fill="#6dbfe8" stroke="#222"/>
<text x="128" y="46" font-size="34" font-weight="500" fill="#fff" textLength="165" lengthAdjust="spacingAndGlyphs">チョウカンヌ</text>
<text x="172" y="16" font-size="9.500" font-weight="500" fill="#fff">東京新聞キャラクター</text>
<circle cx="282" cy="17" r="6" fill="#fff"/>
</svg>
<svg class="i" style="left:969px;top:1431px" width="300" height="60" viewBox="0 0 300 60">
<rect width="300" height="60" fill="#5867a8"/><rect x="3" y="9" width="294" height="40" fill="#fff" stroke="#111" stroke-width="2"/>
<path d="M44 9v40M86 9v40M127 9v40M169 9v40M211 9v40M252 9v40" stroke="#111" stroke-width="1.500"/>
<g font-size="31" font-weight="900" fill="#111"><text x="8" y="40">原</text><text x="50" y="40">発</text><text x="91" y="40">の</text><text x="133" y="40">な</text><text x="175" y="40">い</text><text x="216" y="40">国</text><text x="258" y="40">へ</text></g>
</svg>
<svg class="i" style="left:969px;top:1508px" width="300" height="60" viewBox="0 0 300 60">
<defs><linearGradient id="gb7" x1="0" x2="1"><stop offset="0" stop-color="#1238b0"/><stop offset="1" stop-color="#1ab090"/></linearGradient></defs>
<rect width="300" height="60" fill="url(#gb7)"/><rect x="4" y="4" width="292" height="52" fill="#fff"/>
<text x="15" y="30" font-size="13" font-weight="700" fill="#333">東海地方の</text>
<text x="15" y="46" font-size="13" font-weight="700" fill="#333" textLength="76" lengthAdjust="spacingAndGlyphs">経済ニュースは</text>
<text x="93" y="48" font-size="31" font-weight="900" fill="#2a1a14">中日</text>
<text x="158" y="47" font-size="31" font-weight="900" fill="#2e4fa8" font-family="Liberation Sans" textLength="60" lengthAdjust="spacingAndGlyphs">BiZ</text>
<text x="219" y="47" font-size="31" font-weight="900" fill="#2a1a14" textLength="66" lengthAdjust="spacingAndGlyphs">ナビ</text>
</svg>
<svg class="i" style="left:969px;top:1585px" width="300" height="32" viewBox="0 0 300 32">
<rect x=".5" y=".5" width="299" height="31" fill="#fff" stroke="#a14bc7"/><circle cx="9" cy="3" r="16" fill="#9a4ccf"/><circle cx="22" cy="25" r="3.500" fill="#b374dc"/>
<path d="M285 15h15v3h-15zM272 21h28v7h-28z" fill="#d49ce8"/>
<text x="29" y="21.500" font-size="14" font-weight="700" fill="#7a2fa6">東京新聞「環境と多様性の行動計画」</text>
</svg>

<!-- events -->
<div class="b" style="left:954px;top:1634px;width:330px;height:55px;background:#f3f3f5;border-top:1px solid #dcdcdc;border-bottom:1px solid #e4e4e4"></div>
<div class="t w5" style="left:969px;top:1653px;font-size:16px;color:#333">イベント・出版情報</div>

<div class="th" style="left:969px;top:1706px"><svg width="58" height="56"><path d="M3 28c12-12 40-12 52 0l-6 8H10z" fill="#3c8fdc"/><ellipse cx="29" cy="36" rx="18" ry="2" fill="#7ab7ec"/></svg></div>
<div class="t et" style="left:1039px;top:1706px">深宇宙展〜人類はどこへ向かうのか</div>
<div class="t ed" style="left:1039px;top:1725px">7月12日(土)〜9月28日(日)　日本科学未</div>
<div class="t ed" style="left:1039px;top:1744px">来館</div>
<div class="b hl" style="left:969px;top:1781px;width:300px"></div>

<div class="th" style="left:969px;top:1798px;background:#184a86;border-color:#f0f0f0"><svg width="58" height="56"><text x="7" y="33" font-size="12" font-weight="900" fill="#fff" textLength="44" lengthAdjust="spacingAndGlyphs">氷河期展</text><rect x="6" y="36" width="46" height="1.500" fill="#9fc0e0"/></svg></div>
<div class="t et" style="left:1039px;top:1798px;font-size:13px">氷河期展 〜人類が見た4万年前の世界〜</div>
<div class="t ed" style="left:1039px;top:1817px">7月12日(土)〜10月13日(月・祝)　国立科</div>
<div class="t ed" style="left:1039px;top:1836px">学博物館</div>
<div class="b hl" style="left:969px;top:1872px;width:300px"></div>

<div class="th" style="left:969px;top:1889px"><svg width="58" height="56"><text x="3" y="28" font-size="13" font-weight="900" fill="#111">ゴッホ</text><text x="43" y="28" font-size="9" fill="#111">展</text><text x="8" y="38" font-size="5.500" fill="#444">家族がつないだ</text><text x="14" y="45" font-size="5.500" fill="#444">画家の夢</text></svg></div>
<div class="t et" style="left:1039px;top:1888px">ゴッホ展 家族がつないだ画家の夢</div>
<div class="t ed" style="left:1039px;top:1909px">9月12日(金)〜12月21日(日)　東京都美術</div>
<div class="t ed" style="left:1039px;top:1927px">館</div>
<div class="b hl" style="left:969px;top:1964px;width:300px"></div>

<div class="th" style="left:969px;top:1980px;background:#f6cf12;border-color:#e8e8e8"><svg width="58" height="56"><text x="3" y="15" font-size="8" fill="#b03a22" font-weight="700" transform="rotate(-4 3 15)">ぼっち・ざ・ろっく！</text><rect x="10" y="22" width="8" height="18" fill="#c2566a"/><rect x="21" y="22" width="8" height="18" fill="#3a5a8a"/><rect x="32" y="22" width="8" height="18" fill="#b8a040"/><rect x="43" y="22" width="8" height="18" fill="#5a3a7a"/><rect x="12" y="43" width="34" height="5" fill="#7a3a1a"/></svg></div>
<div class="t et" style="left:1039px;top:1980px">アニメとのコラボタウントレック</div>
<div class="t ed" style="left:1039px;top:2001px">アニメ「ぼっち・ざ・ろっく！」2025年</div>
<div class="t ed" style="left:1039px;top:2020px">11月末までアプリ参加・限定グッズ販売</div>
<div class="t ed" style="left:1039px;top:2039px">期間延長！</div>
<div class="b hl" style="left:969px;top:2075px;width:300px"></div>

<div class="th" style="left:969px;top:2092px"><svg width="58" height="56"><rect x="9" y="0" width="40" height="46" fill="#4a3626"/><rect x="20" y="8" width="22" height="26" fill="#7a5a3a"/></svg></div>
<div class="t et" style="left:1039px;top:2091px">＜東京新聞の本＞</div>
<div class="t ed" style="left:1039px;top:2112px">軍国主義という病がひそむ国　保阪正康講</div>
<div class="t ed" style="left:1039px;top:2130px">演録　　保阪正康 著</div>
<div class="b hl" style="left:969px;top:2167px;width:300px"></div>

<div class="th" style="left:969px;top:2183px"><svg width="58" height="56"><rect x="9" width="40" height="56" fill="#58a0c8"/><rect x="9" y="22" width="40" height="18" fill="#4a7a50"/><rect x="9" y="40" width="40" height="16" fill="#9cbfb0"/><path d="M9 22l12-10 12 8 16-12v16H9z" fill="#2c4a60"/></svg></div>
<div class="t et" style="left:1039px;top:2183px">＜東京新聞の本＞</div>
<div class="t ed" style="left:1039px;top:2203px">絶景ハイク　関東・中部33コース</div>
<div class="t ed" style="left:1039px;top:2222px">重信秀年 著</div>
<div class="b hl" style="left:969px;top:2259px;width:300px"></div>

<div class="th" style="left:969px;top:2276px"><svg width="58" height="56"><rect x="12" y="3" width="36" height="50" fill="#1a4f7a"/><ellipse cx="30" cy="18" rx="7" ry="8" fill="#e6c8b0"/><path d="M18 48c2-16 6-24 12-24s10 8 12 24z" fill="#bcd4e4"/></svg></div>
<div class="t et" style="left:1039px;top:2275px">＜東京新聞の本＞</div>
<div class="t ed" style="left:1039px;top:2295px">平原綾香と開く クラシックの扉　第2楽章</div>
<div class="t ed" style="left:1039px;top:2314px">平原綾香 著</div>
<div class="b hl" style="left:969px;top:2350px;width:300px"></div>

<div class="tri" style="left:970px;top:2387px"></div>
<div class="t ll" style="left:985px;top:2365px">眠っている間にスキンケア 「美容断食」で</div>
<div class="t ll" style="left:985px;top:2383px">10年たっても老けない健康美肌に</div>
<div class="t ll" style="left:985px;top:2400px">美容家・宮本洋子 著</div>
<div class="b hl" style="left:969px;top:2434px;width:300px"></div>
<div class="tri" style="left:970px;top:2461px"></div>
<div class="t ll" style="left:985px;top:2448px">喫茶アネモネ③</div>
<div class="t ll" style="left:985px;top:2466px">柘植文 著</div>
<div class="b hl" style="left:969px;top:2500px;width:300px"></div>

<!-- PR -->
<div class="b" style="left:954px;top:2515px;width:330px;height:57px;background:#f3f3f5;border-top:1px solid #e2e2e2;border-bottom:1px solid #e6e6e6"></div>
<div class="t bd" style="left:969px;top:2535px;font-size:16px;color:#333">PRイチオシ情報</div>

<div class="th" style="left:969px;top:2588px"><svg width="58" height="56"><path d="M0 10l14-8 40 4 4 30-18 20H6z" fill="#f6c4d4"/><rect x="14" y="8" width="30" height="6" fill="#6a9a3a"/><rect x="12" y="13" width="34" height="22" rx="4" fill="#8ab44a" stroke="#333"/><rect x="17" y="18" width="24" height="14" rx="3" fill="#fff"/><circle cx="24" cy="24" r="1.500"/><circle cx="34" cy="24" r="1.500"/><rect x="20" y="36" width="18" height="10" fill="#e46a9a"/><circle cx="14" cy="30" r="3" fill="#e8a02a"/><circle cx="44" cy="30" r="3" fill="#e8a02a"/></svg></div>
<div class="t et bd" style="left:1039px;top:2588px">都電サポーターズ紹介ページ開設</div>
<div class="t ed" style="left:1039px;top:2607px">サポーターズの取り組みをはじめとして</div>
<div class="t ed" style="left:1039px;top:2626px">様々な角度から、魅力を発信します！</div>
<div class="b hl" style="left:969px;top:2663px;width:300px"></div>

<div class="th" style="left:969px;top:2680px;background:linear-gradient(160deg,#3aa0dc,#a8d4ec 60%,#e8c8dc);border-color:#e8e8e8"><svg width="58" height="56"><rect x="24" y="5" width="8" height="7" fill="#fff"/><path d="M20 16h13v28h5v5H20v-5h5V21h-5z" fill="#fff"/></svg></div>
<div class="t et bd" style="left:1039px;top:2680px">東京情報さんぽ</div>
<div class="t ed" style="left:1039px;top:2699px">東京で働く、暮らす、楽しむために</div>
<div class="t ed" style="left:1039px;top:2718px">役立つ情報が集まるサイト</div>
<div class="b hl" style="left:969px;top:2754px;width:300px"></div>

<div class="th" style="left:969px;top:2771px;background:#3f86c8;border-color:#e8e8e8"><svg width="58" height="56"><text x="10" y="24" font-size="15" font-weight="500" fill="#d8eefa">東京</text><text x="5" y="37" font-size="8.500" font-weight="900" fill="#fff">メッセージ</text><text x="24" y="48" font-size="8.500" font-weight="900" fill="#fff">ボード</text><rect x="46" y="6" width="5" height="14" rx="2.500" fill="#c8e8a0" transform="rotate(-10 48 12)"/></svg></div>
<div class="t et bd" style="left:1039px;top:2771px">東京メッセージボード T-Voice!</div>
<div class="t ed" style="left:1039px;top:2791px">T-Voice!がリニューアル！</div>
<div class="t ed" style="left:1039px;top:2810px">あなたの想いが新聞紙面に。</div>
<div class="b hl" style="left:969px;top:2846px;width:300px"></div>

<svg class="i" style="left:969px;top:2877px" width="300" height="55" viewBox="0 0 300 55">
<rect width="300" height="55" fill="#fff"/>
<text x="77" y="34" font-size="30" font-weight="900" fill="#f05a14" textLength="76" lengthAdjust="spacingAndGlyphs">ぐるり</text>
<text x="157" y="36" font-size="34" font-weight="900" fill="#1a9ca0" textLength="67" lengthAdjust="spacingAndGlyphs">東京</text>
<text x="112" y="51" font-size="11" font-weight="900" fill="#222">by 東京新聞</text>
</svg>
<svg class="i" style="left:969px;top:2950px" width="300" height="59" viewBox="0 0 300 59">
<defs><linearGradient id="gpr" x1="0" x2="1" y1="0" y2="1"><stop offset="0" stop-color="#e6f6fb"/><stop offset="1" stop-color="#bfe6f6"/></linearGradient></defs>
<rect width="300" height="59" fill="url(#gpr)"/>
<text x="39" y="36" font-family="Noto Serif CJK SC,serif" font-size="21" font-weight="700" fill="#532d8c" letter-spacing="2">東京新聞</text>
<text x="143" y="35" font-size="12" fill="#333">×</text>
<text x="160" y="37" font-size="21" font-weight="700" fill="#1a4a7e" font-family="Liberation Sans" textLength="92" lengthAdjust="spacingAndGlyphs">PRTIMES</text>
<text x="104" y="50" font-size="9" fill="#1a4a7e" letter-spacing=".5">首都圏のプレスリリース</text>
</svg>
<svg class="i" style="left:969px;top:3026px" width="300" height="60" viewBox="0 0 300 60">
<rect x=".5" y=".5" width="299" height="59" fill="#fff" stroke="#999"/><rect x="9" y="9" width="282" height="16" fill="#1f2a5c"/>
<text x="25" y="21" font-size="10.500" fill="#fff" letter-spacing="1.200" font-style="italic">バックナンバー・写真・グッズなどの販売なら</text>
<text x="11" y="49" font-family="Noto Serif CJK SC,serif" font-size="21" font-weight="700" fill="#222" letter-spacing="2">東京新聞</text>
<text x="117" y="49" font-family="Noto Serif CJK SC,serif" font-size="17" font-weight="700" fill="#222" textLength="169" lengthAdjust="spacingAndGlyphs">オフィシャルショップ</text>
</svg>

<div class="tri" style="left:984px;top:3126px"></div>
<div class="t lk" style="left:999px;top:3121px">大図解</div>
<div class="b hl" style="left:984px;top:3157px;width:269px"></div>
<div class="tri" style="left:984px;top:3175px"></div>
<div class="t lk" style="left:999px;top:3170px">記事データベース</div>
<div class="b hl" style="left:984px;top:3204px;width:269px"></div>
<div class="tri" style="left:984px;top:3223px"></div>
<div class="t lk" style="left:999px;top:3218px">スマートフォン向け情報サービス</div>
<div class="b hl" style="left:984px;top:3253px;width:269px"></div>
<div class="tri" style="left:984px;top:3272px"></div>
<div class="t lk" style="left:999px;top:3267px">東京新聞フォーラム</div>

<!-- footer -->
<div class="b" style="left:0;top:3662px;width:1284px;height:250px;background:#522e8b"></div>
<div class="t fh" style="left:15px;top:3685px">東京新聞から</div>
<div class="t fh" style="left:652px;top:3685px">リンク</div>
<div class="t fh" style="left:971px;top:3685px">サイトのご利用について</div>
<div class="b" style="left:15px;top:3726px;width:617px;height:1px;background:#7254b4"></div>
<div class="b" style="left:652px;top:3726px;width:298px;height:1px;background:#7254b4"></div>
<div class="b" style="left:971px;top:3726px;width:298px;height:1px;background:#7254b4"></div>

<div class="t ft" style="left:15px;top:3743px">会社案内</div>
<div class="t ft" style="left:220px;top:3743px">採用情報</div>
<div class="t ft" style="left:426px;top:3743px">関連企業</div>
<div class="t ft" style="left:15px;top:3778px">新聞購読申込</div>
<div class="t ft" style="left:220px;top:3778px">ウェブ広告掲載</div>
<div class="t ft" style="left:426px;top:3778px">新聞広告掲載</div>
<div class="t ft" style="left:15px;top:3813px">東京新聞社会事業団</div>
<div class="t ft" style="left:220px;top:3813px">表彰事業</div>
<div class="t ft" style="left:426px;top:3813px">個人情報</div>
<div class="t ft" style="left:15px;top:3848px">著作権</div>
<div class="t ft" style="left:220px;top:3848px">ご質問・お問い合わせ</div>
<div class="t ft" style="left:426px;top:3848px">よくある質問</div>

<div class="t ft" style="left:652px;top:3748px">いっしょに読もう！新聞コンクール・NIE月間</div>
<div class="t ft" style="left:652px;top:3783px">新聞科学研究所</div>
<div class="t ft" style="left:652px;top:3818px">47ニュース</div>
<div class="t ft" style="left:652px;top:3853px">中日ドラゴンズ公式ファンクラブ</div>

<div class="t ft" style="left:971px;top:3748px">サイトポリシー</div>
<div class="t ft" style="left:971px;top:3783px">サイトマップ</div>
<div class="t ft" style="left:971px;top:3818px">当サイトへのリンクについて</div>

<div class="t" style="left:1150px;top:3830px;font-family:'Liberation Serif','Noto Serif CJK SC',serif;font-size:26px;line-height:44px;font-weight:700;color:#fff;letter-spacing:3.500px">東京新聞</div>
<div class="t" style="right:15px;top:3877px;font-size:11.800px;color:#fff">Copyright © The Chunichi Shimbun, All Rights Reserved.</div>

<!-- recaptcha -->
<div class="b" style="left:1214px;top:3778px;width:70px;height:60px;background:#fff;box-shadow:0 0 4px rgba(0,0,0,.3);border-radius:2px 0 0 2px"></div>
<svg class="i" style="left:1230px;top:3785px" width="38" height="38" viewBox="0 0 38 38"><path d="M19 1a18 18 0 0 1 18 15H29L24 11l5-4z" fill="#2a57d8"/><path d="M2 20c0-9 7-17 16-18v9c-4 1-7 4-7 9H2z" fill="#3d7bea"/><path d="M36 20a18 18 0 0 1-33 9l7-5c3 5 9 6 14 3l-3-4h15z" fill="#b0b0b0"/></svg>
<div class="t" style="left:1221px;top:3819px;font-size:6px;color:#888;line-height:14px">プライバシー・利用規約</div>
</body>
</html>
